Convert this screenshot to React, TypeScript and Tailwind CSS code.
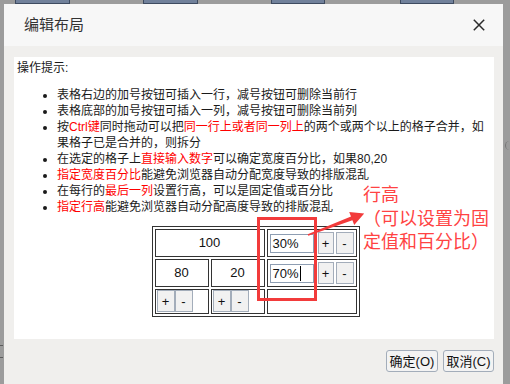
import React from "react";

const red = "text-[#ff0000]";

function Btn({ children, className = "" }: { children: React.ReactNode; className?: string }) {
  return (
    <button
      className={
        "flex h-[22px] items-center justify-center border border-[#a3adba] bg-[#f1f1f1] text-[13px] leading-none text-[#111] " +
        className
      }
    >
      {children}
    </button>
  );
}

function FakeInput({ value, caret }: { value: string; caret?: boolean }) {
  return (
    <div className="flex h-[19px] w-[44px] items-center border border-[#8d9db2] bg-white pl-[2px] text-[13px] leading-none text-[#111]">
      {value}
      {caret && <span className="ml-[1px] inline-block h-[15px] w-px bg-black" />}
    </div>
  );
}

function HeightCell({ value, caret }: { value: string; caret?: boolean }) {
  return (
    <div className="flex items-center border border-[#333] pl-[2px]">
      <FakeInput value={value} caret={caret} />
      <Btn className="ml-[4px] w-[16px]">+</Btn>
      <Btn className="ml-[2px] w-[18px]">-</Btn>
    </div>
  );
}

function ColCell() {
  return (
    <div className="flex items-start border border-[#333] pl-px">
      <Btn className="w-[18px]">+</Btn>
      <Btn className="w-[18px]">-</Btn>
    </div>
  );
}

export default function App() {
  return (
    <div className="relative h-[384px] w-[510px] overflow-hidden bg-[#9c9c9c] font-['Liberation_Sans','Noto_Sans_CJK_SC',sans-serif]">
      {/* page behind the dialog */}
      <div className="flex pl-[15px]">
        <div className="h-[4px] w-[55px] border-x border-b border-[#3e4b60] bg-[#71819b]" />
        <div className="ml-[73px] h-[4px] w-[55px] border-x border-b border-[#3e4b60] bg-[#71819b]" />
        <div className="ml-[73px] h-[4px] w-[54px] border-x border-b border-[#3e4b60] bg-[#71819b]" />
        <div className="ml-[75px] h-[4px] w-[54px] border-x border-b border-[#3e4b60] bg-[#71819b]" />
      </div>
      <div className="absolute left-0 top-[345px] h-px w-[3px] bg-[#5c5c5c]" />
      <div className="absolute left-0 top-[357px] h-px w-[3px] bg-[#5c5c5c]" />
      <div className="absolute left-[505px] top-[141px] h-[9px] w-[6px] rounded-l-full border-l border-[#777]" />

      {/* dialog */}
      <div className="absolute left-[4px] top-[4px] h-[420px] w-[499px] bg-[#f0efed]">
        <div className="flex h-[42px] items-center justify-between bg-[#f7f7f7] pl-[20px] pr-[18px]">
          <span className="text-[15px] text-[#333]">编辑布局</span>
          <svg width="12" height="12" viewBox="0 0 12 12" className="text-[#2a2a2a]">
            <path d="M0.8 0.8 11.2 11.2 M11.2 0.8 0.8 11.2" stroke="currentColor" strokeWidth="1.5" />
          </svg>
        </div>

        <div className="pl-[10px] pr-[9px] pt-[11px]">
          <div className="relative h-[282px] bg-white pl-[3px] pt-[3px] text-[12px] leading-4 text-[#1a1a1a]">
            <p>操作提示:</p>
            <ul className="mt-[11px] list-disc pl-[40px] pr-[6px]">
              <li>表格右边的加号按钮可插入一行，减号按钮可删除当前行</li>
              <li>表格底部的加号按钮可插入一列，减号按钮可删除当前列</li>
              <li>
                按<span className={red}>Ctrl键</span>同时拖动可以把
                <span className={red}>同一行上或者同一列上</span>的两个或两个以上的格子合并，如果格子已是合并的，则拆分
              </li>
              <li>
                在选定的格子上<span className={red}>直接输入数字</span>可以确定宽度百分比，如果80,20
              </li>
              <li>
                <span className={red}>指定宽度百分比</span>能避免浏览器自动分配宽度导致的排版混乱
              </li>
              <li>
                在每行的<span className={red}>最后一列</span>设置行高，可以是固定值或百分比
              </li>
              <li>
                <span className={red}>指定行高</span>能避免浏览器自动分配高度导致的排版混乱
              </li>
            </ul>

            <div className="mx-auto mt-[11px] grid w-fit grid-cols-[54px_54px_90px] grid-rows-[28px_28px_25px] gap-[2px] border border-[#333] p-[2px] text-[13px] text-[#111]">
              <div className="col-span-2 flex items-center justify-center border border-[#333]">100</div>
              <HeightCell value="30%" />
              <div className="flex items-center justify-center border border-[#333]">80</div>
              <div className="flex items-center justify-center border border-[#333]">20</div>
              <HeightCell value="70%" caret />
              <ColCell />
              <ColCell />
              <div className="border border-[#333]" />
            </div>

            {/* annotation */}
            <div className="absolute left-[243px] top-[160px] h-[84px] w-[60px] border-[3px] border-[#f23b3b]" />
            <svg className="absolute left-0 top-0" width="480" height="282">
              <polygon
                fill="#f23b3b"
                points="293.7,177.3 337,159.5 335.2,154.9 350.2,156.6 340.2,167.9 338.4,163.3 294.3,178.7"
              />
            </svg>
            <div className="absolute left-[349px] top-[127px] text-[18px] leading-[23.5px] text-[#ff4343]">
              <p>行高</p>
              <p>（可以设置为固</p>
              <p>定值和百分比）</p>
            </div>
          </div>

          <div className="mt-[11px] flex justify-end gap-[5px]">
            <button className="h-[22px] w-[52px] rounded-[3px] border border-[#a3adba] bg-[#f3f3f3] text-[13px] leading-none text-[#111]">
              确定(O)
            </button>
            <button className="h-[22px] w-[51px] rounded-[3px] border border-[#a3adba] bg-[#f3f3f3] text-[13px] leading-none text-[#111]">
              取消(C)
            </button>
          </div>
        </div>
      </div>
    </div>
  );
}
